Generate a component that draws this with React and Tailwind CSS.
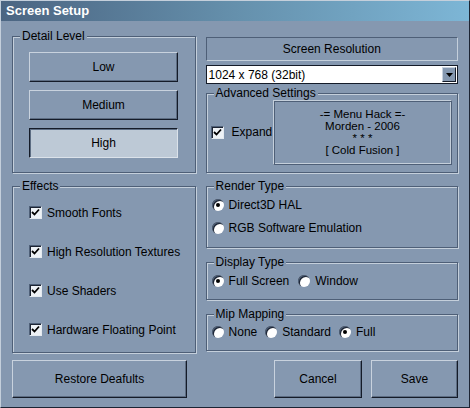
import React from 'react';

const Group = ({ title, className = '', children }) => (
  <div className={`relative border border-[#4e5f77] shadow-[inset_1px_1px_0_#c4cfdb,1px_1px_0_#c4cfdb] ${className}`}>
    <span className="absolute -top-[8px] left-[7px] bg-[#8598b0] px-[2px] leading-[14px]">{title}</span>
    {children}
  </div>
);

const RaisedButton = ({ children, className = '' }) => (
  <button
    type="button"
    className={`flex items-center justify-center border border-t-[#c8d2de] border-l-[#c8d2de] border-b-[#141b28] border-r-[#141b28] bg-[#8598b0] shadow-[inset_-1px_-1px_0_#5c6c82] ${className}`}
  >
    {children}
  </button>
);

const PressedButton = ({ children, className = '' }) => (
  <button
    type="button"
    className={`flex items-center justify-center border border-t-[#141b28] border-l-[#141b28] border-b-[#dbe2ea] border-r-[#dbe2ea] bg-[#bdc9d6] shadow-[inset_1px_1px_0_#5c6c82] ${className}`}
  >
    {children}
  </button>
);

const Check = () => (
  <span className="flex h-[13px] w-[13px] shrink-0 items-center justify-center border border-t-[#4e5f77] border-l-[#4e5f77] border-b-[#e4eaf0] border-r-[#e4eaf0] bg-[#eef2f6] shadow-[inset_1px_1px_0_#1c2433]">
    <svg width="9" height="9" viewBox="0 0 9 9">
      <path d="M1 4 L3.5 6.5 L8 1.5" fill="none" stroke="#000" strokeWidth="1.8" />
    </svg>
  </span>
);

const Radio = ({ on }) => (
  <span className="flex h-[12px] w-[12px] shrink-0 items-center justify-center rounded-full bg-white shadow-[inset_1px_1px_0_#4e5f77,inset_2px_2px_0_#1c2433]">
    {on && <span className="h-[4px] w-[4px] rounded-full bg-black" />}
  </span>
);

const CheckRow = ({ label }) => (
  <div className="flex h-[13px] items-center gap-[5px]">
    <Check />
    <span>{label}</span>
  </div>
);

const RadioItem = ({ label, on }) => (
  <div className="flex h-[12px] items-center gap-[5px]">
    <Radio on={on} />
    <span>{label}</span>
  </div>
);

export default function App() {
  return (
    <div className="flex h-[408px] w-[470px] flex-col border border-t-[#c4cfdb] border-l-[#c4cfdb] border-b-[#1c2433] border-r-[#1c2433] bg-[#8598b0] font-['Liberation_Sans',Arial,sans-serif] text-[12px] leading-[14px] text-black">
      {/* Title bar */}
      <div className="flex h-[20px] shrink-0 items-center bg-gradient-to-r from-[#4b6582] via-[#6590ac] to-[#7db6d6] pl-[5px] text-[13px] font-bold text-white">
        Screen Setup
      </div>

      <div className="flex flex-1 flex-col pl-[11px] pr-[11px] pt-[15px]">
        <div className="flex gap-[10px]">
          {/* Left column */}
          <div className="flex w-[184px] flex-col">
            <Group title="Detail Level" className="h-[137px]">
              <div className="flex flex-col gap-[8px] pl-[16px] pt-[15px]">
                <RaisedButton className="h-[30px] w-[149px]">Low</RaisedButton>
                <RaisedButton className="h-[30px] w-[149px]">Medium</RaisedButton>
                <PressedButton className="h-[30px] w-[149px]">High</PressedButton>
              </div>
            </Group>

            <Group title="Effects" className="mt-[13px] h-[167px]">
              <div className="flex flex-col gap-[26px] pl-[16px] pt-[19px]">
                <CheckRow label="Smooth Fonts" />
                <CheckRow label="High Resolution Textures" />
                <CheckRow label="Use Shaders" />
                <CheckRow label="Hardware Floating Point" />
              </div>
            </Group>
          </div>

          {/* Right column */}
          <div className="flex w-[253px] flex-col">
            <div className="mt-px flex h-[24px] items-center justify-center border border-t-[#4e5f77] border-l-[#4e5f77] border-b-[#c4cfdb] border-r-[#c4cfdb]">
              Screen Resolution
            </div>

            <div className="mt-[4px] flex h-[19px] items-center border border-[#141b28] bg-white pl-[2px]">
              <span className="flex-1">1024 x 768 (32bit)</span>
              <span className="mr-px flex h-[15px] w-[14px] items-center justify-center border border-t-[#c8d2de] border-l-[#c8d2de] border-b-[#141b28] border-r-[#141b28] bg-[#8598b0]">
                <svg width="7" height="4" viewBox="0 0 7 4">
                  <path d="M0 0 H7 L3.5 4 Z" fill="#000" />
                </svg>
              </span>
            </div>

            <Group title="Advanced Settings" className="mt-[9px] h-[80px]">
              <div className="flex h-full items-center pl-[4px] pr-[5px] pb-[3px] pt-[1px]">
                <Check />
                <span className="ml-[8px]">Expand</span>
                <div className="ml-auto flex h-[65px] w-[179px] flex-col items-center justify-center border border-t-[#c4cfdb] border-l-[#c4cfdb] border-b-[#4e5f77] border-r-[#4e5f77] text-[11.5px] leading-[12px] shadow-[inset_1px_1px_0_#4e5f77,inset_-1px_-1px_0_#c4cfdb]">
                  <span>-= Menu Hack =-</span>
                  <span>Morden - 2006</span>
                  <span>* * *</span>
                  <span>[ Cold Fusion ]</span>
                </div>
              </div>
            </Group>

            <Group title="Render Type" className="mt-[13px] h-[62px]">
              <div className="flex flex-col gap-[11px] pl-[5px] pt-[12px]">
                <RadioItem label="Direct3D HAL" on />
                <RadioItem label="RGB Software Emulation" />
              </div>
            </Group>

            <Group title="Display Type" className="mt-[14px] h-[38px]">
              <div className="flex gap-[9px] pl-[5px] pt-[12px]">
                <RadioItem label="Full Screen" on />
                <RadioItem label="Window" />
              </div>
            </Group>

            <Group title="Mip Mapping" className="mt-[14px] h-[37px]">
              <div className="flex gap-[8px] pl-[5px] pt-[11px]">
                <RadioItem label="None" />
                <RadioItem label="Standard" />
                <RadioItem label="Full" on />
              </div>
            </Group>
          </div>
        </div>

        {/* Bottom buttons */}
        <div className="mt-[7px] flex">
          <RaisedButton className="h-[38px] w-[175px]">Restore Deafults</RaisedButton>
          <RaisedButton className="ml-auto h-[38px] w-[88px]">Cancel</RaisedButton>
          <RaisedButton className="ml-[9px] h-[38px] w-[87px]">Save</RaisedButton>
        </div>
      </div>
    </div>
  );
}
